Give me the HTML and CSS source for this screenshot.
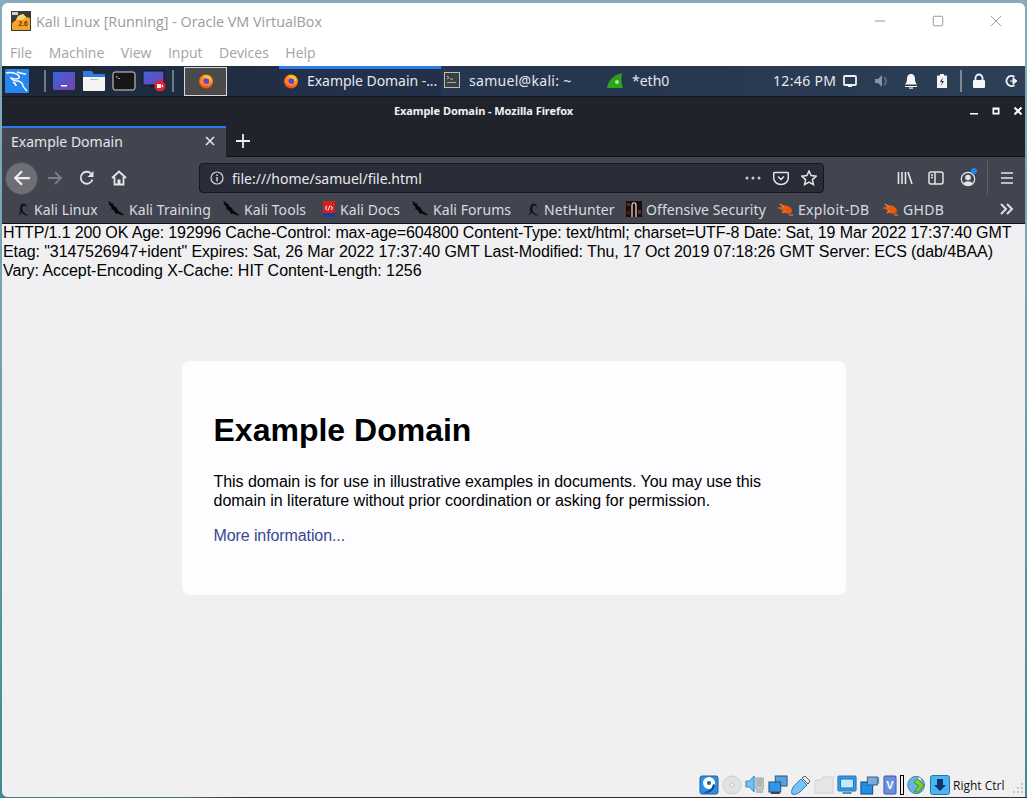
FILE: index.html
```html
<!DOCTYPE html>
<html lang="en">
<head>
<meta charset="utf-8">
<title>Kali Linux [Running] - Oracle VM VirtualBox</title>
<link rel="stylesheet" href="styles.css">
</head>
<body>
<svg class="defs" aria-hidden="true">
  <defs>
    <radialGradient id="fxg" cx="0.6" cy="0.3" r="0.85"><stop offset="0" stop-color="#ffd23a"/><stop offset="0.5" stop-color="#ff7f1a"/><stop offset="1" stop-color="#ea1c3a"/></radialGradient>
    <linearGradient id="scr" x1="0" y1="0" x2="1" y2="1"><stop offset="0" stop-color="#3568dc"/><stop offset="1" stop-color="#7c3fa8"/></linearGradient>
    <symbol id="firefox" viewBox="0 0 16 16">
      <circle cx="8" cy="8.500" r="7" fill="url(#fxg)"/>
      <circle cx="8.400" cy="8" r="3" fill="#5b48d0"/>
      <path d="M5 1.500C7 3 6 5 8 5.200c2.600.2 4 2 3.600 4.400C13.500 8 13.500 4.500 11.500 2.800 11.800 4 11 4.600 10.200 4 9 3 7 2.500 5 1.500Z" fill="#ffc12e"/>
      <path d="M1.500 7c.5 3 3 5.500 6.500 5.500 2 0 3.500-1 3.800-2.400-1 1-3.200 1.500-5 .6C5.200 10 4.500 8.500 5 6.800 3.500 7.500 2.500 7.500 1.500 7Z" fill="#ff8a1c"/>
    </symbol>
    <symbol id="dragon" viewBox="0 0 18 18">
      <path d="M1 1l2 .5L4 3l2 .5 1.500 3 2 1 2 3.500 2.500 1.500 3.500 3-3.500-.5-3-1.500L9 14 7 10.500 4.500 9 4 6 1.500 4.500 2.500 3.500Z" fill="#08080a"/>
    </symbol>
    <symbol id="kalihat" viewBox="0 0 14 14">
      <path d="M1 13.500C3 13 4.500 12 3.800 8 3.500 5 5 1.500 7.500 1.500c2.300 0 3.300 1.800 3.800 4-.9-1.200-2-2-3.300-1.800C6.300 4 6 6 6.800 8.500c.6 2 2.700 3.500 6 5H9.500C7.500 12.500 6.200 11.200 5.700 10 5.500 11.500 4 13.500 1 13.500Z" fill="#14151a"/>
    </symbol>
    <symbol id="bug" viewBox="0 0 16 14">
      <ellipse cx="8.500" cy="7.500" rx="5.800" ry="3.800" transform="rotate(25 8.500 7.500)" fill="#e8590c"/>
      <path d="M0 6h4M2 2l4 3M11 13l4 0M4 11l3-2" stroke="#f58a3a" stroke-width="1.200" fill="none"/>
    </symbol>
  </defs>
</svg>

<div class="window">
  <header class="vb-title">
    <svg class="vb-logo" viewBox="0 0 20 20" aria-hidden="true">
      <rect width="20" height="20" fill="#3a3a3a"/>
      <path d="M1 12 5 9l2-4 5-2 3 3 4 1v12H1Z" fill="#f0a52c"/>
      <path d="M5 9l2-4 5-2 3 3-4 3Z" fill="#f7d774"/>
      <text class="vb-logo-num" x="12" y="15">2.6</text>
      <rect x="1" y="1" width="6" height="3" fill="#cfcfcf"/>
    </svg>
    <span class="vb-title-text">Kali Linux [Running] - Oracle VM VirtualBox</span>
    <div class="vb-controls">
      <svg class="vb-ctl" viewBox="0 0 14 14"><path d="M1 7h12" /></svg>
      <svg class="vb-ctl" viewBox="0 0 14 14"><rect x="1.500" y="1.500" width="11" height="11" rx="1"/></svg>
      <svg class="vb-ctl" viewBox="0 0 14 14"><path d="M1 1l12 12M13 1 1 13"/></svg>
    </div>
  </header>
  <nav class="vb-menu">
    <span>File</span><span>Machine</span><span>View</span><span>Input</span><span>Devices</span><span>Help</span>
  </nav>

  <div class="panel">
    <svg class="kali-logo" viewBox="0 0 24 24" aria-hidden="true">
      <rect width="24" height="24" rx="1" fill="#2787f0"/>
      <path class="kali-swirl" d="M1 4c5-1 11 0 13 3 1 2-1 3-3 3-2 0-4-1-5-1 1 2 4 3 7 3 3 .5 5 3 5 5 1 2 2 3 4 5"/>
      <path class="kali-swirl" d="M12 3c4 1 6 2 9 2M8 13c2 1 3 2 3 4"/>
    </svg>
    <i class="p-sep p-sep-a"></i>
    <svg class="launch l1" viewBox="0 0 24 20" aria-hidden="true"><rect width="22" height="18" x="1" y="1" rx="1" fill="url(#scr)"/><rect x="9" y="14" width="6" height="1.500" fill="#fff"/></svg>
    <svg class="launch l2" viewBox="0 0 24 22" aria-hidden="true"><path d="M1 1h9l2 3H1Z" fill="#2e7ae0"/><rect x="1" y="4" width="22" height="3" fill="#2e7ae0"/><path d="M1 7h22v13a1 1 0 0 1-1 1H2a1 1 0 0 1-1-1Z" fill="#f4f4f4"/><rect x="8" y="9" width="8" height="1" fill="#bbb"/></svg>
    <svg class="launch l3" viewBox="0 0 24 20" aria-hidden="true"><rect x="1" y="1" width="22" height="18" rx="2" fill="#161616" stroke="#d8d8d8"/><path d="M4 5l1.500 1L4 7" stroke="#ccc" fill="none" stroke-width=".7"/><rect x="6" y="7" width="2" height=".8" fill="#ccc"/></svg>
    <svg class="launch l4" viewBox="0 0 24 22" aria-hidden="true"><rect x="1" y="1" width="21" height="14" fill="url(#scr)" stroke="#15151a"/><rect x="8" y="15" width="7" height="2" fill="#15151a"/><circle cx="18" cy="16" r="5.500" fill="#e8202a"/><rect x="15" y="14" width="4" height="4" fill="#fff"/><path d="M19 16l2-1.500v3Z" fill="#fff"/></svg>
    <i class="p-sep p-sep-b"></i>
    <div class="fx-launch"><svg class="fx16" aria-hidden="true"><use href="#firefox"/></svg></div>
    <div class="p-task p-task-active">
      <svg class="fx16" aria-hidden="true"><use href="#firefox"/></svg>
      <span>Example Domain -...</span>
    </div>
    <div class="p-task p-task-term">
      <svg class="term-ic" viewBox="0 0 16 16" aria-hidden="true"><rect x=".5" y=".5" width="15" height="15" fill="#3b3f41" stroke="#b8bcbc"/><path d="M3 4l2 1.500L3 7M6 7h3" stroke="#ddd" fill="none" stroke-width=".8"/><rect x="3" y="10" width="9" height="1" fill="#aaa"/></svg>
      <span>samuel@kali: ~</span>
    </div>
    <div class="p-task p-task-shark">
      <svg class="shark-ic" viewBox="0 0 16 16" aria-hidden="true"><path d="M0 16C1 9 6 3 15 1c-1 4-1 10 1 15Z" fill="#2da31c"/><circle cx="10" cy="10" r="2" fill="#a7e59b"/></svg>
      <span>*eth0</span>
    </div>
    <span class="p-clock">12:46 PM</span>
    <svg class="tray t-net" viewBox="0 0 14 14" aria-hidden="true"><rect x="1" y="2" width="12" height="9" rx="1" fill="none" stroke="#f0f2f4" stroke-width="1.800"/><rect x="5" y="11" width="4" height="2" fill="#f0f2f4"/></svg>
    <svg class="tray t-vol" viewBox="0 0 16 14" aria-hidden="true"><path d="M1 5h3l4-4v12L4 9H1Z" fill="#8a93a0"/><path d="M10 3a5 5 0 0 1 0 8" stroke="#5f6b7b" stroke-width="2" fill="none"/></svg>
    <svg class="tray t-bell" viewBox="0 0 14 16" aria-hidden="true"><path d="M7 1c3 0 4 2.500 4 5 0 3 1 4 2 5.500H1C2 10 3 9 3 6c0-2.500 1-5 4-5Z" fill="#f4f6f8"/><rect x="1" y="13" width="12" height="1" fill="#f4f6f8"/><rect x="5" y="14.500" width="4" height="1.200" fill="#f4f6f8"/></svg>
    <svg class="tray t-bat" viewBox="0 0 10 14" aria-hidden="true"><path d="M3 0h4v1.500h3V14H0V1.500h3Z" fill="#f0f2f4"/><path d="M6 3 3 8h2l-1 4 3-5H5Z" fill="#2a3a4e"/></svg>
    <i class="p-sep p-sep-c"></i>
    <svg class="tray t-lock" viewBox="0 0 14 16" aria-hidden="true"><path d="M3.500 7V5a3.500 3.500 0 0 1 7 0v2" stroke="#f4f6f8" stroke-width="1.800" fill="none"/><rect x="1" y="7" width="12" height="8" rx="1" fill="#f4f6f8"/></svg>
    <svg class="tray t-out" viewBox="0 0 14 14" aria-hidden="true"><path d="M10.500 3A5 5 0 1 0 10.500 11" stroke="#f0f2f4" stroke-width="2" fill="none"/><path d="M6 7h5M9 3.800 13 7 9 10.200Z" stroke="#f0f2f4" fill="#f0f2f4"/></svg>
  </div>

  <div class="ff-title">
    <span>Example Domain - Mozilla Firefox</span>
    <div class="ff-wc">
      <svg viewBox="0 0 8 8"><rect y="6" width="8" height="1.500"/></svg>
      <svg viewBox="0 0 8 8"><path d="M.5.5h7v7h-7Z M2.200 2.800v2.900h3.600V2.800Z" fill-rule="evenodd"/></svg>
      <svg viewBox="0 0 8 8"><path d="M.5.5l7 7M7.500.5l-7 7" stroke="#fff" stroke-width="2"/></svg>
    </div>
  </div>

  <div class="ff-tabs">
    <div class="ff-tab">
      <span>Example Domain</span>
      <svg class="ff-x" viewBox="0 0 10 10" aria-hidden="true"><path d="M1 1l8 8M9 1 1 9"/></svg>
    </div>
    <svg class="ff-plus" viewBox="0 0 14 14" aria-hidden="true"><path d="M7 0v14M0 7h14"/></svg>
  </div>

  <div class="ff-nav">
    <div class="nb-back"><svg viewBox="0 0 16 16" aria-hidden="true"><path d="M15 8H2M8 2 2 8l6 6"/></svg></div>
    <svg class="nb nb-fwd" viewBox="0 0 16 16" aria-hidden="true"><path d="M1 8h13M8 2l6 6-6 6"/></svg>
    <svg class="nb nb-rel" viewBox="0 0 16 16" aria-hidden="true"><path d="M13.500 9.500A6 6 0 1 1 12 3.500"/><path class="fill" d="M14.500 1v6h-6Z"/></svg>
    <svg class="nb nb-home" viewBox="0 0 16 16" aria-hidden="true"><path d="M1 8l7-6.500L15 8M3.500 7v7.500h9V7"/><rect class="fill" x="6.500" y="9.500" width="3" height="5"/></svg>
    <div class="urlbar">
      <svg class="u-info" viewBox="0 0 14 14" aria-hidden="true"><circle cx="7" cy="7" r="6" fill="none" stroke="#d5d6d9" stroke-width="1.200"/><rect x="6.300" y="6" width="1.400" height="4.500" fill="#d5d6d9"/><rect x="6.300" y="3.500" width="1.400" height="1.500" fill="#d5d6d9"/></svg>
      <span class="u-text">file:///home/samuel/file.html</span>
      <svg class="u-dots" viewBox="0 0 16 4" aria-hidden="true"><circle cx="2" cy="2" r="1.500"/><circle cx="8" cy="2" r="1.500"/><circle cx="14" cy="2" r="1.500"/></svg>
      <svg class="nb u-pocket" viewBox="0 0 16 16" aria-hidden="true"><path d="M1.500 2.500h13a.8.8 0 0 1 .8.8V8a7.300 6.500 0 0 1-14.600 0V3.300a.8.8 0 0 1 .8-.8ZM5 6.500l3 3 3-3"/></svg>
      <svg class="nb u-star" viewBox="0 0 16 16" aria-hidden="true"><path d="M8 1l2.100 4.600 5 .6-3.700 3.400 1 5L8 12.100l-4.400 2.500 1-5L.9 6.200l5-.6Z"/></svg>
    </div>
    <svg class="nb tb-lib" viewBox="0 0 16 16" aria-hidden="true"><path d="M1.500 2v12M5 2v12M8.500 2v12M11 2l4 12"/></svg>
    <svg class="nb tb-side" viewBox="0 0 16 16" aria-hidden="true"><rect x="1" y="2" width="14" height="12" rx="2"/><path d="M7 2v12M3 5h2M3 7.500h2"/></svg>
    <div class="tb-prof">
      <svg class="nb" viewBox="0 0 16 16" aria-hidden="true"><circle cx="8" cy="8" r="6.700"/><circle class="fill" cx="8" cy="6.500" r="2.800"/><path class="fill" d="M3.500 12.500c1-3 8-3 9 0-2 2-7 2-9 0Z"/></svg>
      <i class="tb-dot"></i>
    </div>
    <i class="tb-sep"></i>
    <svg class="nb tb-menu" viewBox="0 0 16 16" aria-hidden="true"><path d="M2 3h12M2 8h12M2 13h12"/></svg>
  </div>

  <div class="ff-bm">
    <div class="bm bm-1"><svg class="bi14" aria-hidden="true"><use href="#kalihat"/></svg><span>Kali Linux</span></div>
    <div class="bm bm-2"><svg class="bi18" aria-hidden="true"><use href="#dragon"/></svg><span>Kali Training</span></div>
    <div class="bm bm-3"><svg class="bi18" aria-hidden="true"><use href="#dragon"/></svg><span>Kali Tools</span></div>
    <div class="bm bm-4"><svg class="bi14" viewBox="0 0 14 16" aria-hidden="true"><rect x="1" width="12" height="16" fill="#d71f1f"/><rect x="1" y="12" width="12" height="4" fill="#1c3f94"/><path d="M5 5 3.500 7 5 9M9 5l1.500 2L9 9M8 4.500 6 9.500" stroke="#fff" fill="none"/></svg><span>Kali Docs</span></div>
    <div class="bm bm-5"><svg class="bi18" aria-hidden="true"><use href="#dragon"/></svg><span>Kali Forums</span></div>
    <div class="bm bm-6"><svg class="bi14" aria-hidden="true"><use href="#kalihat"/></svg><span>NetHunter</span></div>
    <div class="bm bm-7"><svg class="bi16" viewBox="0 0 16 16" aria-hidden="true"><rect width="16" height="16" fill="#1b0b0b"/><rect x="1" y="2" width="3" height="3" fill="#6b2a1e"/><rect x="12" y="9" width="3" height="4" fill="#6b2a1e"/><rect x="1" y="10" width="3" height="4" fill="#4a1a14"/><path d="M6 16V4c0-3 4-3 4 0v12" stroke="#e6e6e6" fill="none" stroke-width="1.200"/></svg><span>Offensive Security</span></div>
    <div class="bm bm-8"><svg class="bi15" aria-hidden="true"><use href="#bug"/></svg><span>Exploit-DB</span></div>
    <div class="bm bm-9"><svg class="bi15" aria-hidden="true"><use href="#bug"/></svg><span>GHDB</span></div>
    <svg class="bm-more" viewBox="0 0 14 12" aria-hidden="true"><path d="M1 1l5 5-5 5M7 1l5 5-5 5"/></svg>
  </div>

  <main class="page">
    <p class="raw"><span class="raw-1">HTTP/1.1 200 OK Age: 192996 Cache-Control: max-age=604800 Content-Type: text/html; charset=UTF-8 Date: Sat, 19 Mar 2022 17:37:40 GMT</span> <span class="raw-2">Etag: "3147526947+ident" Expires: Sat, 26 Mar 2022 17:37:40 GMT Last-Modified: Thu, 17 Oct 2019 07:18:26 GMT Server: ECS (dab/4BAA)</span> <span class="raw-3">Vary: Accept-Encoding X-Cache: HIT Content-Length: 1256</span></p>
    <div class="card">
      <h1>Example Domain</h1>
      <p>This domain is for use in illustrative examples in documents. You may use this <span class="tail">domain in literature without prior coordination or asking for permission.</span></p>
      <p><a href="#">More information...</a></p>
    </div>
  </main>

  <footer class="status">
    <svg class="st" viewBox="0 0 20 20" aria-hidden="true"><rect x="1" y="1" width="18" height="18" rx="2" fill="#2f8fe0" stroke="#1a5fa8"/><circle cx="10" cy="8" r="6" fill="#fff"/><circle cx="10" cy="8" r="2" fill="#1a5fa8"/><path d="M4 17c5 0 9-2 10-8l2 1c-1 5-5 8-9 8Z" fill="#123f7c"/></svg>
    <svg class="st" viewBox="0 0 20 20" aria-hidden="true"><circle cx="10" cy="10" r="9" fill="#e2e2e2" stroke="#cdcdcd"/><circle cx="10" cy="10" r="2" fill="#f6f6f6" stroke="#c4c4c4"/></svg>
    <svg class="st" viewBox="0 0 22 20" preserveAspectRatio="none" aria-hidden="true"><path d="M1 6h4l5-5v16l-5-5H1Z" fill="#6ec3f2" stroke="#2a86d0"/><rect x="12" y="3" width="8" height="11" fill="#dcdcdc" stroke="#999"/><path d="M13 5h6M13 7h6M13 9h6M13 11h6" stroke="#8a8a8a"/><rect x="12" y="15" width="8" height="3" fill="#bdbdbd"/></svg>
    <svg class="st" viewBox="0 0 22 20" preserveAspectRatio="none" aria-hidden="true"><rect x="8" y="1" width="13" height="10" fill="#5a9fdc" stroke="#2f4f78"/><rect x="1" y="7" width="13" height="10" fill="#2f97ea" stroke="#1f4f80"/><rect x="3" y="17" width="10" height="2" fill="#444"/></svg>
    <svg class="st" viewBox="0 0 20 20" aria-hidden="true"><path d="M1 19c-1-3 0-5 2-8l7-7 6 6-7 7c-3 2-6 3-8 2Z" fill="#7ac2f2" stroke="#2c7fc4"/><path d="M11 3l3-2 5 5-2 3Z" fill="#eee" stroke="#555"/></svg>
    <svg class="st" viewBox="0 0 20 20" aria-hidden="true"><path d="M1 5V18H19V2H9L7 5Z" fill="#e6e6e6" stroke="#d2d2d2"/></svg>
    <svg class="st" viewBox="0 0 22 20" preserveAspectRatio="none" aria-hidden="true"><rect x="1" y="1" width="20" height="15" rx="1" fill="#2f9cec" stroke="#1f6fb0"/><rect x="4" y="4" width="14" height="9" fill="#c6e8fb" stroke="#1f6fb0"/><rect x="6" y="17" width="10" height="2" fill="#5a8fbc"/></svg>
    <svg class="st" viewBox="0 0 22 20" preserveAspectRatio="none" aria-hidden="true"><rect x="1" y="7" width="13" height="12" fill="#1f8fe8" stroke="#123f78"/><rect x="8" y="2" width="11" height="8" fill="#7baad8" stroke="#3d5c80"/><path d="M19 3l2-1v7l-2-1Z" fill="#5a7fa8"/></svg>
    <svg class="st st-v" viewBox="0 0 14 20" aria-hidden="true"><rect x="1" y="1" width="12" height="18" rx="1" fill="#6a8fe0" stroke="#3a55a8"/><text class="st-v-t" x="7" y="14">V</text></svg>
    <i class="st-bar"></i>
    <svg class="st st-mouse" viewBox="0 0 24 22" preserveAspectRatio="none" aria-hidden="true"><ellipse cx="11" cy="11" rx="10" ry="9.500" fill="#69b3e8" stroke="#2a6fac"/><circle cx="15" cy="4.500" r="1.800" fill="#fff"/><path d="M8 8l5-4 7 7-6 8-5-1 5-6Z" fill="#7ccf2c" stroke="#3f8a14"/></svg>
    <svg class="st" viewBox="0 0 20 20" aria-hidden="true"><rect x=".5" y=".5" width="19" height="19" rx="2" fill="#4cb4ee" stroke="#1f78bc"/><path d="M7 4h6v6h3l-6 6-6-6h3Z" fill="#10346e"/></svg>
    <span class="st-key">Right Ctrl</span>
    <svg class="st-grip" viewBox="0 0 12 12" aria-hidden="true"><path d="M9 1h2v2H9ZM5 5h2v2H5ZM9 5h2v2H9ZM1 9h2v2H1ZM5 9h2v2H5ZM9 9h2v2H9Z"/></svg>
  </footer>
</div>
</body>
</html>
```

FILE: styles.css
```css
* { box-sizing: border-box; }
html, body { margin: 0; padding: 0; }
body {
  width: 1027px;
  height: 798px;
  overflow: hidden;
  background:
    linear-gradient(90deg, #45808a 0%, #4c6a72 18%, #2e2b33 24%, #2a2a30 100%) bottom / 100% 1px no-repeat,
    linear-gradient(180deg, #86adbc 0%, #6f9fae 50%, #3e8a95 100%);
  font-family: "Noto Sans", sans-serif;
}
.defs { position: absolute; width: 0; height: 0; }

.window {
  margin: 3px 2px 0 2px;
  width: 1023px;
  height: 794px;
  background: #f0f0f2;
  border-radius: 6px 6px 0 6px;
  overflow: hidden;
  display: flex;
  flex-direction: column;
}

/* VirtualBox chrome */
.vb-title {
  height: 36px;
  flex: none;
  background: #fff;
  display: flex;
  align-items: center;
  padding-left: 9px;
  color: #9b9b9b;
  font-family: "Open Sans", sans-serif;
  font-size: 14.35px;
}
.vb-logo { width: 20px; height: 20px; margin-right: 5px; }
.vb-logo-num { font: bold 6.500px "Liberation Sans", sans-serif; fill: #7a2a00; text-anchor: middle; }
.vb-title-text { white-space: nowrap; }
.vb-controls { margin-left: auto; display: flex; gap: 46px; padding-right: 23px; }
.vb-ctl { width: 12px; height: 12px; fill: none; stroke: #8a8a8a; stroke-width: 1; }
.vb-menu {
  height: 27px;
  flex: none;
  background: #fff;
  display: flex;
  gap: 16.500px;
  padding-left: 8px;
  align-items: center;
  color: #a3a3a3;
  font-family: "Open Sans", sans-serif;
  font-size: 14px;
}

/* Kali panel */
.panel {
  height: 31px;
  flex: none;
  background: linear-gradient(90deg, #1d2839 0%, #23324a 45%, #2d4057 100%);
  border-bottom: 1px solid #14161c;
  display: flex;
  align-items: center;
  color: #e4e8ee;
  font-size: 14px;
  white-space: nowrap;
}
.kali-logo { width: 24px; height: 24px; margin-left: 3px; flex: none; }
.kali-swirl { fill: none; stroke: #fff; stroke-width: 1.500; }
.p-sep { width: 2px; height: 22px; background: #6d7888; flex: none; }
.p-sep-a { margin-left: 15px; }
.launch { flex: none; width: 24px; margin-left: 6px; }
.l1 { height: 20px; }
.l2 { height: 22px; }
.l3 { height: 20px; }
.l4 { height: 22px; }
.p-sep-b { margin-left: 6px; }
.fx-launch {
  width: 43px;
  height: 29px;
  margin-left: 10px;
  flex: none;
  background: #4a4a4a;
  border: 1px solid #d8d8d8;
  display: flex;
  align-items: center;
  justify-content: center;
}
.fx16 { width: 16px; height: 16px; flex: none; }
.p-task { height: 30px; display: flex; align-items: center; flex: none; padding-bottom: 2px; }
.p-task-active {
  width: 162px;
  margin-left: 52px;
  padding-left: 4px;
  gap: 8px;
  background: #22304a;
  border-top: 3px solid #2b7ceb;
  padding-bottom: 4px;
  letter-spacing: -0.05px;
}
.p-task-term { width: 165px; padding-left: 3px; gap: 9px; background: #26364e; letter-spacing: 0.3px; }
.term-ic { width: 16px; height: 16px; flex: none; }
.p-task-shark { width: 100px; padding-left: 1px; gap: 9px; }
.shark-ic { width: 16px; height: 16px; flex: none; }
.p-clock { margin-left: 67px; flex: none; letter-spacing: 0.35px; margin-bottom: 2px; }
.tray { flex: none; }
.t-net { width: 14px; height: 14px; margin-left: 7px; }
.t-vol { width: 16px; height: 14px; margin-left: 17px; }
.t-bell { width: 14px; height: 16px; margin-left: 14px; }
.t-bat { width: 10px; height: 14px; margin-left: 19px; }
.p-sep-c { margin-left: 13px; background: #7e8896; }
.t-lock { width: 14px; height: 16px; margin-left: 10px; }
.t-out { width: 14px; height: 14px; margin-left: 18px; }

/* Firefox */
.ff-title {
  height: 29px;
  flex: none;
  background: #20232c;
  color: #f2f2f4;
  font-size: 11px;
  font-weight: 700;
  letter-spacing: -0.06px;
  display: flex;
  align-items: center;
  justify-content: center;
  padding: 0 60px 2px 0;
  position: relative;
}
.ff-wc {
  position: absolute;
  right: 3px;
  top: 10px;
  display: flex;
  gap: 14px;
}
.ff-wc svg { width: 8px; height: 8px; fill: #fff; }
.ff-tabs {
  height: 31px;
  flex: none;
  background: #21232c;
  display: flex;
  align-items: center;
  border-bottom: 1px solid #111217;
}
.ff-tab {
  width: 224px;
  height: 31px;
  background: #42454f;
  border-top: 2px solid #2b7ceb;
  color: #e4e5e8;
  font-size: 14px;
  display: flex;
  align-items: center;
  justify-content: space-between;
  padding: 0 11px 2px 9px;
}
.ff-x { width: 10px; height: 10px; stroke: #e4e5e8; stroke-width: 1.600; fill: none; }
.ff-plus { width: 14px; height: 14px; margin-left: 10px; stroke: #eceded; stroke-width: 1.800; fill: none; }
.ff-nav {
  height: 42px;
  flex: none;
  background: #42454f;
  display: flex;
  align-items: center;
  padding-left: 3px;
}
.nb { width: 16px; height: 16px; fill: none; stroke: #e4e5e8; stroke-width: 1.800; flex: none; }
.nb .fill { fill: #e4e5e8; stroke: none; }
.nb-back {
  width: 33px;
  height: 33px;
  border-radius: 50%;
  background: #6e6f75;
  border: 1px solid #55565c;
  display: flex;
  align-items: center;
  justify-content: center;
  flex: none;
}
.nb-back svg { width: 18px; height: 18px; fill: none; stroke: #eeeeee; stroke-width: 2; }
.nb-fwd { margin-left: 9px; stroke: #7c7e85; }
.nb-rel { margin-left: 16px; }
.nb-home { margin-left: 16px; }
.urlbar {
  width: 625px;
  height: 30px;
  margin-left: 72px;
  flex: none;
  background: #2a2c37;
  border: 1px solid #16171c;
  border-radius: 4px;
  display: flex;
  align-items: center;
  padding-left: 10px;
  color: #e8e9ec;
  font-size: 14px;
}
.u-info { width: 14px; height: 14px; flex: none; }
.u-text { margin-left: 8px; }
.u-dots { width: 16px; height: 4px; margin-left: auto; fill: #c8c9cd; }
.u-pocket { margin-left: 12px; stroke-width: 1.500; }
.u-star { margin-left: 12px; margin-right: 6px; stroke-width: 1.500; }
.tb-lib { margin-left: 73px; stroke-width: 1.600; }
.tb-side { margin-left: 15px; stroke-width: 1.500; }
.tb-prof { position: relative; margin-left: 16px; width: 16px; height: 16px; }
.tb-prof .nb { stroke-width: 1.200; }
.tb-dot {
  position: absolute;
  right: -1px;
  top: -2px;
  width: 6px;
  height: 6px;
  border-radius: 50%;
  background: #1f86f0;
}
.tb-sep { width: 1px; height: 34px; background: #5f626b; margin-left: 11px; flex: none; }
.tb-menu { margin-left: 11px; stroke-width: 1.700; }

.ff-bm {
  height: 25px;
  flex: none;
  background: #42454f;
  border-bottom: 1px solid #111217;
  display: flex;
  align-items: center;
  padding: 0 0 4px 14px;
  color: #d9dbe0;
  font-size: 14px;
  letter-spacing: 0.07px;
  white-space: nowrap;
}
.bm { display: flex; align-items: center; gap: 4px; flex: none; }
.bi14 { width: 14px; height: 14px; flex: none; }
.bm-4 .bi14 { height: 16px; }
.bi15 { width: 16px; height: 14px; flex: none; }
.bi16 { width: 16px; height: 16px; flex: none; }
.bi18 { width: 18px; height: 18px; flex: none; }
.bm-1 { width: 91px; }
.bm-2 { width: 115px; }
.bm-3 { width: 100px; }
.bm-4 { width: 89px; }
.bm-5 { width: 115px; }
.bm-6 { width: 100px; }
.bm-7 { width: 152px; }
.bm-8 { width: 105px; letter-spacing: 0.3px; }
.bm-9 { letter-spacing: 0.3px; }
.bm-more { width: 14px; height: 12px; margin-left: auto; margin-right: 11px; fill: none; stroke: #dfe0e4; stroke-width: 2; }

/* Page content */
.page {
  flex: 1;
  min-height: 0;
  color: #000;
  font-family: "Liberation Sans", Arial, sans-serif;
  font-size: 16px;
  line-height: 19px;
}
.raw { margin: -1px 0 0; padding: 0 0 0 1px; width: 1020px; }
.raw-1 { letter-spacing: -0.13px; }
.raw-2 { letter-spacing: -0.09px; }
.raw-3 { letter-spacing: -0.045px; }
.card {
  width: 664px;
  height: 234px;
  margin: 81px auto 0;
  padding: 32px;
  background: #fdfdff;
  border-radius: 8px;
}
.card h1 { margin: 19px 0 23px; font-size: 32px; line-height: 37px; font-weight: 700; }
.card p { margin: 0 0 16px; letter-spacing: -0.05px; }
.card .tail { letter-spacing: -0.02px; }
.card a { color: #38488f; text-decoration: none; letter-spacing: -0.1px; }

/* VirtualBox status bar */
.status {
  height: 26px;
  flex: none;
  background: #f0f0f0;
  display: flex;
  align-items: center;
  padding: 2px 0 0 697px;
  gap: 3px;
  color: #111;
  font-family: "Open Sans", sans-serif;
  font-size: 12px;
  white-space: nowrap;
}
.st { width: 20px; height: 20px; flex: none; }
.st-v { width: 14px; }
.st-v-t { font: bold 11px "Liberation Sans", sans-serif; fill: #fff; text-anchor: middle; }
.st-bar { width: 4px; height: 20px; border: 1px solid #000; flex: none; }
.st-grip { width: 12px; height: 12px; fill: #c6c6c6; margin-left: 5px; margin-top: 6px; flex: none; }
```
